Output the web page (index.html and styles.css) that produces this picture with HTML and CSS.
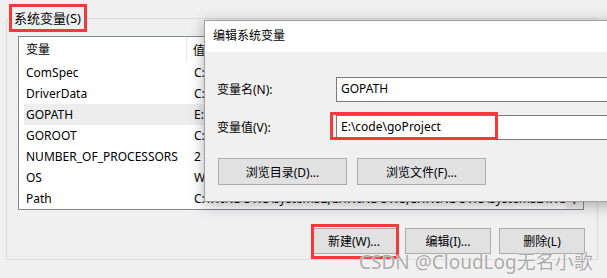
FILE: index.html
```html
<!DOCTYPE html>
<html>
<head>
    <title>环境变量</title>
    <link rel="stylesheet" href="styles.css">
</head>
<body>
    <div id="envWindow">
        <fieldset class="group">
            <legend class="group-title">系统变量(S)</legend>
            <div class="list">
                <div class="list-body">
                    <div class="list-header">
                        <div class="col-name">变量</div>
                        <div class="col-value">值</div>
                    </div>
                    <div class="row"><div class="col-name">ComSpec</div><div class="col-value">C:\WINDOWS\system32\cmd.exe</div></div>
                    <div class="row"><div class="col-name">DriverData</div><div class="col-value">C:\Windows\System32\Drivers\DriverData</div></div>
                    <div class="row selected"><div class="col-name">GOPATH</div><div class="col-value">E:\code\goProject</div></div>
                    <div class="row"><div class="col-name">GOROOT</div><div class="col-value">C:\Program Files\Go\</div></div>
                    <div class="row"><div class="col-name">NUMBER_OF_PROCESSORS</div><div class="col-value">2</div></div>
                    <div class="row"><div class="col-name">OS</div><div class="col-value">Windows_NT</div></div>
                    <div class="row"><div class="col-name">Path</div><div class="col-value">C:\WINDOWS\system32;C:\WINDOWS;C:\WINDOWS\System32\Wbem;C:\WINDOWS\System32\WindowsPowerShell\v1.0\;C:\WINDOWS\System32\OpenSSH\</div></div>
                </div>
                <div class="scrollbar">
                    <span class="scroll-arrow">&#9662;</span>
                </div>
            </div>
            <div class="actions">
                <button class="win-btn">新建(W)...</button>
                <button class="win-btn">编辑(I)...</button>
                <button class="win-btn">删除(L)</button>
            </div>
        </fieldset>
    </div>

    <!-- dialog on top of the env window -->
    <div id="editDialog">
        <div class="dialog-title">编辑系统变量</div>
        <div class="dialog-body">
            <div class="field">
                <label class="field-label">变量名(N):</label>
                <div class="field-input">GOPATH</div>
            </div>
            <div class="field">
                <label class="field-label">变量值(V):</label>
                <div class="field-input">E:\code\goProject</div>
            </div>
            <div class="dialog-actions">
                <button class="win-btn wide">浏览目录(D)...</button>
                <button class="win-btn wide">浏览文件(F)...</button>
            </div>
        </div>
    </div>

    <!-- red annotation boxes -->
    <div class="mark mark-value"></div>
    <div class="mark mark-new"></div>

    <div class="watermark">CSDN @CloudLog无名小歌</div>
</body>
</html>
```

FILE: styles.css
```css
body {
    margin: 0;
    width: 607px;
    height: 278px;
    overflow: hidden;
    position: relative;
    background-color: #f0f0f0;
    font-family: "Noto Sans", "Noto Sans CJK SC", sans-serif;
    font-size: 12px;
    color: #000;
}

#envWindow {
    padding: 4px 0 0 6px;
}

.group {
    margin: 0;
    min-width: 0;
    width: 566px;
    height: 250px;
    padding: 4px 13px 0 11px;
    border: 1px solid #dcdcdc;
}

.group-title {
    margin-left: -9px;
    padding: 1px 3px 1px 2px;
    line-height: 20px;
    font-size: 13px;
    border: 3px solid #f23a3a;
}

.list {
    display: flex;
    height: 172px;
    border: 1px solid #828790;
    background-color: #fff;
}

.list-body {
    flex: 1;
    min-width: 0;
    overflow: hidden;
}

.list-header {
    display: flex;
    height: 25px;
    align-items: center;
}

.list-header .col-name {
    padding-left: 7px;
    width: 160px;
    height: 25px;
    line-height: 25px;
    border-right: 1px solid #e5e5e5;
}

.list-header .col-value {
    padding-left: 6px;
}

.row {
    display: flex;
    height: 21px;
    line-height: 21px;
    margin-left: 5px;
    white-space: nowrap;
}

.row .col-name {
    width: 168px;
    padding-left: 2px;
    flex-shrink: 0;
}

.row.selected {
    background-color: #ededed;
}

.scrollbar {
    width: 17px;
    flex-shrink: 0;
    background-color: #f0f0f0;
    display: flex;
    flex-direction: column;
    justify-content: flex-end;
    align-items: center;
}

.scroll-arrow {
    font-size: 9px;
    color: #606060;
    line-height: 14px;
}

.actions {
    display: flex;
    justify-content: flex-end;
    gap: 8px;
    margin-top: 18px;
    margin-right: -1px;
}

.win-btn {
    width: 86px;
    height: 26px;
    padding: 0;
    background-color: #e1e1e1;
    border: 1px solid #adadad;
    font-family: "Noto Sans", "Noto Sans CJK SC", sans-serif;
    font-size: 12px;
    color: #000;
}

.win-btn.wide {
    width: 129px;
    height: 27px;
}

#editDialog {
    position: absolute;
    left: 204px;
    top: 20px;
    width: 430px;
    height: 180px;
    background-color: #f0f0f0;
    border: 1px solid #a0a0a0;
    box-shadow: 0 3px 14px rgba(0, 0, 0, 0.3);
}

.dialog-title {
    height: 31px;
    line-height: 30px;
    padding-left: 8px;
    background-color: #fff;
}

.dialog-body {
    padding: 25px 0 0 12px;
}

.field {
    display: flex;
    align-items: center;
    margin-bottom: 13px;
}

.field-label {
    width: 119px;
    line-height: 22px;
}

.field-input {
    flex: 1;
    height: 23px;
    line-height: 22px;
    padding-left: 4px;
    border: 1px solid #7a7a7a;
    background-color: #fff;
}

.dialog-actions {
    display: flex;
    gap: 10px;
    margin-top: 18px;
    margin-left: 1px;
}

.mark {
    position: absolute;
    border: 3px solid #f23a3a;
}

.mark-value {
    left: 330px;
    top: 112px;
    width: 162px;
    height: 22px;
}

.mark-new {
    left: 311px;
    top: 224px;
    width: 82px;
    height: 29px;
}

.watermark {
    position: absolute;
    left: 359px;
    top: 247px;
    font-size: 19px;
    white-space: nowrap;
    color: rgba(140, 140, 140, 0.75);
    text-shadow: 0 0 1px #fff, 0 0 1px #fff;
}
```
